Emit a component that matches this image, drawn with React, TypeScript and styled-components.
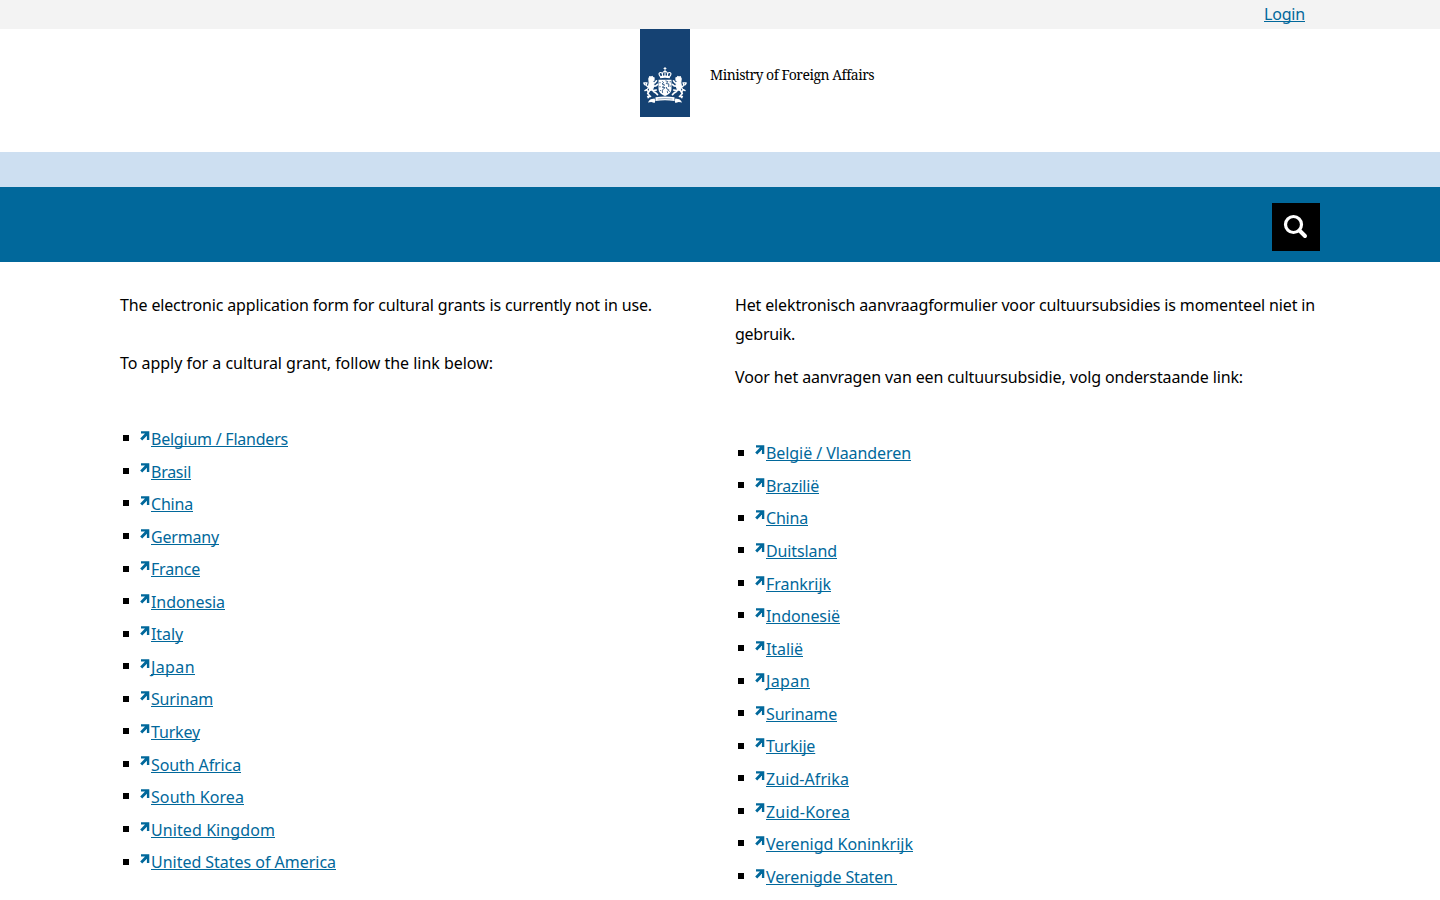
import React from 'react';
import styled, { createGlobalStyle } from 'styled-components';

const GlobalStyle = createGlobalStyle`
  * { box-sizing: border-box; }
  body {
    margin: 0;
    background: #fff;
    color: #000;
    font-family: "Noto Sans", "Open Sans", sans-serif;
    font-size: 16px;
    line-height: 28.8px;
    overflow: hidden;
  }
`;

const Page = styled.div`
  height: 900px;
  overflow: hidden;
`;

const TopBar = styled.div`
  height: 29px;
  background: #f3f3f3;
`;

const Container = styled.div`
  width: 1200px;
  margin: 0 auto;
`;

const TopBarInner = styled(Container)`
  display: flex;
  justify-content: flex-end;
  padding-right: 15px;
`;

const Link = styled.a<{ $track?: number }>`
  color: #01689b;
  text-decoration: underline;
  text-decoration-thickness: 1px;
  text-decoration-skip-ink: none;
  text-underline-offset: 1px;
  letter-spacing: ${(p) => p.$track ?? 0}px;
  white-space: pre;
`;

const Header = styled.header`
  display: flex;
  height: 123px;
  padding-left: 640px;
  gap: 20px;
`;

const Ribbon = styled.div`
  width: 50px;
  height: 88px;
  background: #154273;
`;

const Ministry = styled.span`
  margin-top: 31px;
  font-family: "Noto Serif", "DejaVu Serif Condensed", serif;
  font-size: 14px;
  line-height: 29px;
  letter-spacing: -0.49px;
`;

const LightBand = styled.div`
  height: 35px;
  background: #cddff1;
`;

const NavBar = styled.nav`
  height: 75px;
  background: #01689b;
`;

const NavInner = styled(Container)`
  display: flex;
  justify-content: flex-end;
  padding-top: 16px;
`;

const SearchButton = styled.button`
  display: block;
  width: 48px;
  height: 48px;
  padding: 0;
  border: 0;
  background: #000;
`;

const Columns = styled(Container)`
  display: grid;
  grid-template-columns: 585px 585px;
  gap: 30px;
  padding-top: 29.2px;
`;

const Paragraph = styled.p`
  margin: 0 0 14.4px;
`;

const Tracked = styled.span<{ $track: number }>`
  letter-spacing: ${(p) => p.$track}px;
  white-space: nowrap;
`;

const List = styled.ul`
  margin: 47.4px 0 0;
  padding: 0;
  list-style: none;
`;

const Item = styled.li`
  display: flex;
  height: 32.57px;
  padding-left: 3px;
`;

const Bullet = styled.span`
  width: 6px;
  height: 6px;
  margin: 10.3px 11px 0 0;
  background: #000;
`;

const ArrowIcon = styled.svg`
  display: block;
  width: 10px;
  height: 10px;
  margin: 5.9px 1px 0 0;
`;

type Entry = [label: string, track: number];

const english: Entry[] = [
  ['Belgium / Flanders', -0.227],
  ['Brasil', -0.266],
  ['China', -0.2],
  ['Germany', -0.18],
  ['France', -0.195],
  ['Indonesia', -0.057],
  ['Italy', -0.094],
  ['Japan', 0.388],
  ['Surinam', -0.176],
  ['Turkey', -0.169],
  ['South Africa', -0.108],
  ['South Korea', 0.085],
  ['United Kingdom', 0.088],
  ['United States of America', -0.026],
];

const dutch: Entry[] = [
  ['België / Vlaanderen', -0.076],
  ['Brazilië', -0.199],
  ['China', -0.2],
  ['Duitsland', -0.108],
  ['Frankrijk', -0.047],
  ['Indonesië', -0.063],
  ['Italië', -0.078],
  ['Japan', 0.388],
  ['Suriname', -0.158],
  ['Turkije', -0.17],
  ['Zuid-Afrika', 0.077],
  ['Zuid-Korea', 0.195],
  ['Verenigd Koninkrijk', 0.004],
  ['Verenigde Staten ', -0.111],
];

function CountryList({ entries }: { entries: Entry[] }) {
  return (
    <List>
      {entries.map(([label, track]) => (
        <Item key={label}>
          <Bullet />
          <ArrowIcon viewBox="0 0 10 10">
            <path d="M1 .2H9.3V9H6.9V4.7L2.2 9.4.2 7.4 5 2.6H1Z" fill="#01689b" />
          </ArrowIcon>
          <Link $track={track}>{label}</Link>
        </Item>
      ))}
    </List>
  );
}

function Lion() {
  return (
    <g fill="none" stroke="#fff" strokeLinecap="round" strokeLinejoin="round">
      <path d="M8.8 49.8l1-2.2 1.2.6 1.1-.8 1 1.2 1 .2-.1 2.6-1.5.9 1.2 1.6.2 3-1.3 3.7-2.7.8-1.4-3.8.7-3.8z" fill="#fff" strokeWidth="1.1" />
      <path d="M12.5 54.4l2.3-.6 1.7-2M12.8 57.2l3-.3 1.8-1.6M11 60l2.4 1.7 2.9-.7M13.3 62.3l2.6 1.7 1.6 1.7M9.8 61l-2.1 3.5 2 2.2-1.5 1.8" strokeWidth="1.7" />
      <path d="M8.5 63l-1.7-2 1.8-2.6-2.5-2.1L7 53.8l-3.2.1M5 55.7l-.9-.9M6.6 60.6l-1.7 1" strokeWidth="1.3" />
      <path d="M7.5 67.3l3.2.2" strokeWidth="1.3" />
    </g>
  );
}

function Crest() {
  return (
    <svg width="50" height="88" viewBox="0 0 50 88" display="block">
      <g fill="none" stroke="#fff">
        <path d="M25 38v4M23.6 39.5h2.8" strokeWidth="1" />
        <path d="M20.3 47.5c-3-3.5.2-5 1.8-3.2M29.7 47.5c3-3.5-.2-5-1.8-3.2M22.7 47.3c-1-3.2.4-4.8 2.3-5 1.9.2 3.3 1.8 2.3 5M25 43v4.3" strokeWidth="1.1" />
        <path d="M20 48.3q5-1.4 10 0" strokeWidth="2.2" />
      </g>
      <path d="M18.5 50.8h13v8.7c0 4-2.8 6-6.5 7.5-3.7-1.5-6.5-3.5-6.5-7.5z" fill="#fff" />
      <g fill="none" stroke="#154273" strokeWidth=".8">
        <path d="M22.4 52.3l1.2 1.5-1.6 1.2 2.5.8M25.5 51.8l2.4.8-1.7 2 2.7.3-.4 3M24.8 56l-2.6 2.2 2.9.5-2.9 2.4.4 2.8M26.3 58l.6 2 2 .9-1.5 1.5.2 1.7M20 53v1.2M20 57v1.3M20.4 61v1M30.2 52v1.4M30.2 56.5v1.3M29.4 61.8v1" />
      </g>
      <Lion />
      <g transform="translate(50 0) scale(-1 1)"><Lion /></g>
      <g fill="#fff">
        <path d="M15.5 68.2q9.5-1.5 19 0v3.9q-9.5-1.5-19 0z" />
        <path d="M14.6 69.4l-3.9.8-1.2 1-1.7 2.3 3.5-.6 3.3 1 .7-2.1zM35.4 69.4l3.9.8 1.2 1 1.7 2.3-3.5-.6-3.3 1-.7-2.1z" />
      </g>
      <path d="M17.5 70q7.5-1 15 0" fill="none" stroke="#154273" strokeWidth=".4" />
    </svg>
  );
}

export default function App() {
  return (
    <Page>
      <GlobalStyle />
      <TopBar>
        <TopBarInner>
          <Link $track={-0.184}>Login</Link>
        </TopBarInner>
      </TopBar>
      <Header>
        <Ribbon>
          <Crest />
        </Ribbon>
        <Ministry>Ministry of Foreign Affairs</Ministry>
      </Header>
      <LightBand />
      <NavBar>
        <NavInner>
          <SearchButton aria-label="Search">
            <svg width="48" height="48" viewBox="0 0 48 48" fill="none" stroke="#fff" display="block">
              <circle cx="21.5" cy="21.5" r="8" strokeWidth="3.2" />
              <path d="M27.5 27.5l5.5 5.5" strokeWidth="4" strokeLinecap="round" />
            </svg>
          </SearchButton>
        </NavInner>
      </NavBar>
      <Columns as="main">
        <section>
          <Paragraph>
            <Tracked $track={-0.146}>The electronic application form for cultural grants is currently not in use.</Tracked>
            <br />
            <br />
            <Tracked $track={-0.026}>To apply for a cultural grant, follow the link below:</Tracked>
          </Paragraph>
          <CountryList entries={english} />
        </section>
        <section>
          <Paragraph>
            <Tracked $track={-0.144}>Het elektronisch aanvraagformulier voor cultuursubsidies is momenteel niet in</Tracked>
            <br />
            <Tracked $track={-0.271}>gebruik.</Tracked>
          </Paragraph>
          <Paragraph>
            <Tracked $track={-0.125}>Voor het aanvragen van een cultuursubsidie, volg onderstaande link:</Tracked>
          </Paragraph>
          <CountryList entries={dutch} />
        </section>
      </Columns>
    </Page>
  );
}
